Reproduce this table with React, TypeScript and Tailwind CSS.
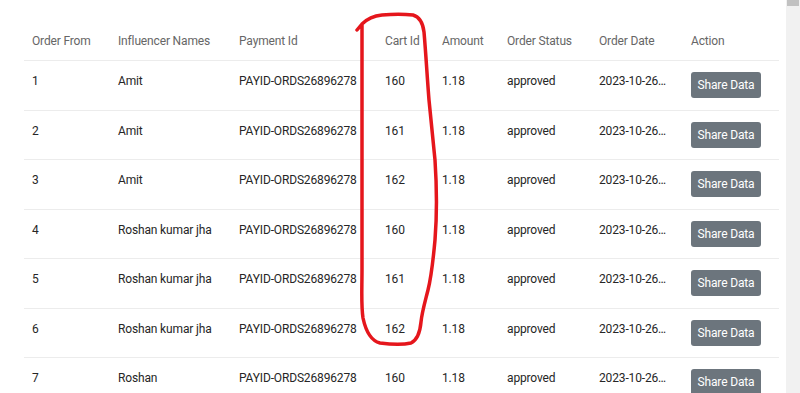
import React from 'react';

const orders = [
  { from: 1, name: 'Amit', cart: 160 },
  { from: 2, name: 'Amit', cart: 161 },
  { from: 3, name: 'Amit', cart: 162 },
  { from: 4, name: 'Roshan kumar jha', cart: 160 },
  { from: 5, name: 'Roshan kumar jha', cart: 161 },
  { from: 6, name: 'Roshan kumar jha', cart: 162 },
  { from: 7, name: 'Roshan', cart: 160 },
];

const headers = ['Order From', 'Influencer Names', 'Payment Id', 'Cart Id', 'Amount', 'Order Status', 'Order Date', 'Action'];

const App = () => {
  return (
    <div className="relative flex h-[393px] w-[800px] overflow-hidden bg-white font-['Segoe_UI',Roboto,sans-serif] text-[12px] tracking-[-0.15px]">
      <main className="flex-1 pl-6 pt-5">
        <table className="w-[755px] table-fixed border-collapse">
          <colgroup>
            <col className="w-[86px]" />
            <col className="w-[121px]" />
            <col className="w-[146px]" />
            <col className="w-[57px]" />
            <col className="w-[65px]" />
            <col className="w-[92px]" />
            <col className="w-[92px]" />
            <col className="w-[96px]" />
          </colgroup>
          <thead>
            <tr className="border-b border-[#ececec]">
              {headers.map((h) => (
                <th key={h} className="px-2 pt-3 pb-[10px] text-left align-top font-normal leading-[18px] text-[#666]">
                  {h}
                </th>
              ))}
            </tr>
          </thead>
          <tbody className="text-[#262626]">
            {orders.map((o) => (
              <tr key={o.from} className="border-b border-[#ececec]">
                <td className="px-2 pt-[11px] pb-[11.5px] align-top leading-[18px]">{o.from}</td>
                <td className="px-2 pt-[11px] pb-[11.5px] align-top leading-[18px]">{o.name}</td>
                <td className="px-2 pt-[11px] pb-[11.5px] align-top leading-[18px]">PAYID-ORDS26896278</td>
                <td className="px-2 pt-[11px] pb-[11.5px] align-top leading-[18px]">{o.cart}</td>
                <td className="px-2 pt-[11px] pb-[11.5px] align-top leading-[18px]">1.18</td>
                <td className="px-2 pt-[11px] pb-[11.5px] align-top leading-[18px]">approved</td>
                <td className="px-2 pt-[11px] pb-[11.5px] align-top leading-[18px]">2023-10-26…</td>
                <td className="px-2 pt-[11px] pb-[11.5px] align-top leading-[18px]">
                  <button className="h-[26px] w-[70px] rounded-[3px] bg-[#6c757d] text-[12px] text-white">Share Data</button>
                </td>
              </tr>
            ))}
          </tbody>
        </table>
      </main>

      {/* scrollbar */}
      <div className="w-[14px] bg-[#f1f1f1] px-[1px]">
        <div className="h-[6px] bg-[#c1c1c1]" />
      </div>

      {/* hand-drawn highlight */}
      <svg className="pointer-events-none absolute left-0 top-0" width="800" height="393" viewBox="0 0 800 393">
        <path
          d="M357 30 L362 24 C366 20 372 16 382 15 C392 14 405 14 413 15 C420 17 423 24 424 32 C426 55 427 75 429 100 C431 120 433 140 435 160 C437 190 437 215 435 240 C433 262 431 278 428 290 C425 302 422 312 421 322 C420 333 417 340 411 343 C402 345 388 344 380 343 C372 341 366 332 363 318 C361 305 362 290 362 270 L362 24"
          fill="none"
          stroke="#e5161c"
          strokeWidth="3.5"
          strokeLinecap="round"
          strokeLinejoin="round"
        />
      </svg>
    </div>
  );
};

export default App;
